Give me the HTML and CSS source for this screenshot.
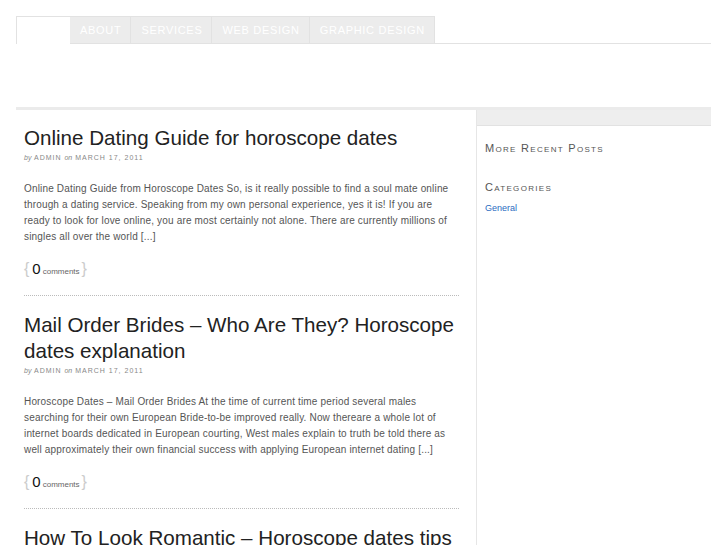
FILE: index.html
```html
<!DOCTYPE html>
<html>
<head>
<meta charset="utf-8">
<link rel="stylesheet" href="styles.css">
</head>
<body>
<div class="wrap">
  <nav class="nav">
    <a class="tab home" href="#"></a>
    <a class="tab" href="#">About</a>
    <a class="tab" href="#">Services</a>
    <a class="tab" href="#">Web Design</a>
    <a class="tab" href="#">Graphic Design</a>
    <span class="nav-fill"></span>
  </nav>
  <header class="header"></header>
  <div class="container">
    <main class="content">
      <article class="post">
        <h2 class="post-title">Online Dating Guide for horoscope dates</h2>
        <div class="meta"><em>by</em> ADMIN <em>on</em> MARCH 17, 2011</div>
        <p class="excerpt">Online Dating Guide from Horoscope Dates So, is it really possible to find a soul mate online through a dating service. Speaking from my own personal experience, yes it is! If you are ready to look for love online, you are most certainly not alone. There are currently millions of singles all over the world [...]</p>
        <div class="comments"><span class="brace">{</span><span class="num">0</span><span class="word">comments</span><span class="brace">}</span></div>
      </article>
      <article class="post">
        <h2 class="post-title">Mail Order Brides – Who Are They? Horoscope dates explanation</h2>
        <div class="meta"><em>by</em> ADMIN <em>on</em> MARCH 17, 2011</div>
        <p class="excerpt">Horoscope Dates – Mail Order Brides At the time of current time period several males searching for their own European Bride-to-be improved really. Now thereare a whole lot of internet boards dedicated in European courting, West males explain to truth be told there as well approximately their own financial success with applying European internet dating [...]</p>
        <div class="comments"><span class="brace">{</span><span class="num">0</span><span class="word">comments</span><span class="brace">}</span></div>
      </article>
      <article class="post">
        <h2 class="post-title">How To Look Romantic – Horoscope dates tips</h2>
      </article>
    </main>
    <aside class="sidebar">
      <div class="side-top"></div>
      <h3 class="widget-title">More Recent Posts</h3>
      <h3 class="widget-title">Categories</h3>
      <ul class="cat-list"><li><a href="#">General</a></li></ul>
    </aside>
  </div>
</div>
</body>
</html>
```

FILE: styles.css
```css
html, body {
  margin: 0;
  padding: 0;
  background: #fff;
  overflow: hidden;
}
body {
  font-family: "Liberation Sans", Arial, Helvetica, sans-serif;
  color: #444;
}
.wrap {
  margin-left: 16px;
  width: 695px;
}
.nav {
  display: flex;
  margin-top: 16px;
  height: 28px;
}
.tab {
  display: flex;
  align-items: center;
  box-sizing: border-box;
  padding: 0 9px 0 10px;
  background: #ececec;
  border-top: 1px solid #e2e2e2;
  border-right: 1px solid #e2e2e2;
  border-bottom: 1px solid #e2e2e2;
  color: #fff;
  text-decoration: none;
  text-transform: uppercase;
  font-size: 11px;
  letter-spacing: 0.7px;
}
.tab.home {
  width: 54px;
  background: #fff;
  border-left: 1px solid #e2e2e2;
  border-right: 0;
  border-bottom: 0;
}
.nav-fill {
  flex: 1;
  border-bottom: 1px solid #e2e2e2;
}
.header {
  height: 63px;
  border-bottom: 3px solid #ebebeb;
}
.container {
  display: flex;
}
.content {
  width: 435px;
  padding: 0 17px 0 8px;
}
.post {
  border-bottom: 1px dotted #bbb;
  padding: 16px 0 13px;
}
.post:first-child {
  padding-top: 15px;
}
.post:last-child {
  border-bottom: 0;
}
.post-title {
  margin: 0;
  font-size: 20.6px;
  line-height: 26px;
  font-weight: normal;
  color: #222;
}
.meta {
  font-size: 7px;
  letter-spacing: 1px;
  color: #888;
  margin-top: 2px;
  line-height: 10px;
}
.meta em {
  letter-spacing: 0;
  font-style: italic;
}
.excerpt {
  margin: 18px 0 0;
  font-size: 10px;
  letter-spacing: 0.17px;
  line-height: 16px;
  color: #555;
}
.comments {
  margin-top: 14px;
  display: flex;
  align-items: baseline;
  line-height: 20px;
}
.brace {
  font-size: 16px;
  color: #ccc;
}
.num {
  font-size: 15px;
  color: #111;
  margin: 0 2px 0 3px;
}
.word {
  font-size: 8px;
  color: #666;
  margin-right: 2px;
}
.sidebar {
  flex: 1;
  border-left: 1px solid #e6e6e6;
  min-height: 440px;
}
.side-top {
  height: 15px;
  background: #eeeeee;
  border-bottom: 1px solid #e2e2e2;
}
.widget-title {
  margin: 15px 0 0 8px;
  font-size: 11px;
  font-weight: normal;
  font-variant: small-caps;
  letter-spacing: 1.3px;
  color: #555;
  line-height: 14px;
}
.widget-title + .widget-title {
  margin-top: 25px;
}
.cat-list {
  list-style: none;
  margin: 3px 0 0 8px;
  padding: 0;
}
.cat-list a {
  font-size: 9px;
  color: #2a6bbf;
  text-decoration: none;
}
```
